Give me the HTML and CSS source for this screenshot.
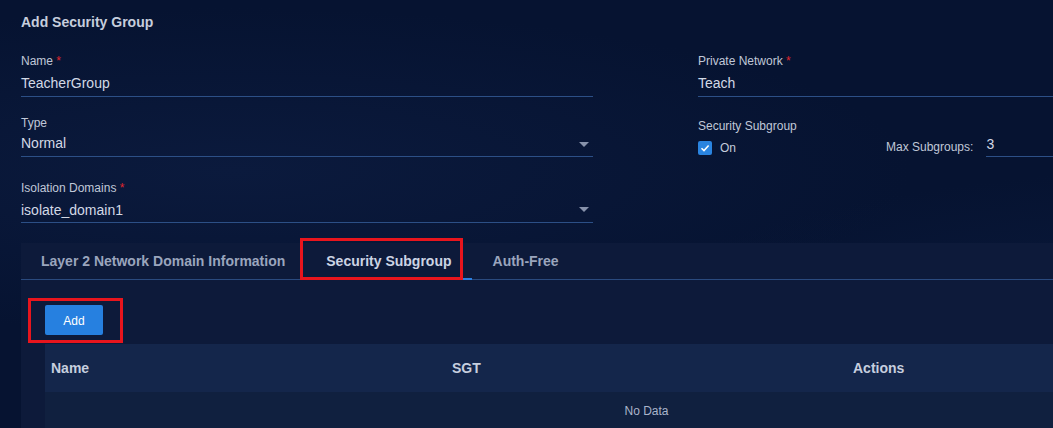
FILE: index.html
```html
<!DOCTYPE html>
<html lang="en">
<head>
    <meta charset="UTF-8">
    <title>Add Security Group</title>
    <link rel="stylesheet" href="styles.css">
</head>
<body>
<div class="page">
    <h2 class="title">Add Security Group</h2>

    <div class="form">
        <div class="field">
            <label>Name <i>*</i></label>
            <div class="input">TeacherGroup</div>
        </div>
        <div class="field">
            <label>Private Network <i>*</i></label>
            <div class="input">Teach</div>
        </div>

        <div class="field row2">
            <label>Type</label>
            <div class="input select">Normal<span class="arrow"></span></div>
        </div>
        <div class="field row2 sub">
            <label>Security Subgroup</label>
            <div class="sub-row">
                <div class="check">
                    <span class="box">
                        <svg width="10" height="10" viewBox="0 0 10 10"><path d="M1.5 5.2 L4 7.6 L8.6 2.6" fill="none" stroke="#fff" stroke-width="1.5"/></svg>
                    </span>
                    On
                </div>
                <span class="max-label">Max Subgroups:</span>
                <div class="input max">3</div>
            </div>
        </div>

        <div class="field row3">
            <label>Isolation Domains <i>*</i></label>
            <div class="input select">isolate_domain1<span class="arrow"></span></div>
        </div>
        <div class="field row3"></div>
    </div>

    <div class="panel">
        <ul class="tabs">
            <li>Layer 2 Network Domain Information</li>
            <li class="active">Security Subgroup</li>
            <li>Auth-Free</li>
        </ul>
        <div class="tab-body">
            <button class="btn">Add</button>
            <table class="grid">
                <thead>
                    <tr><th>Name</th><th>SGT</th><th>Actions</th></tr>
                </thead>
                <tbody>
                    <tr><td colspan="3" class="empty">No Data</td></tr>
                </tbody>
            </table>
        </div>
    </div>

    <!-- annotation marks -->
    <span class="mark mark-tab"></span>
    <span class="mark mark-add"></span>
</div>
</body>
</html>
```

FILE: styles.css
```css
* {
    margin: 0;
    padding: 0;
    box-sizing: border-box;
    list-style: none;
}
html, body {
    height: 100%;
    overflow: hidden;
}
body {
    background: #061331;
    font-family: "Liberation Sans", Arial, sans-serif;
    color: #c3cbdb;
}
.page {
    position: relative;
    width: 1300px;
    height: 428px;
    padding: 14px 0 0 21px;
    background: radial-gradient(ellipse at 18% 40%, #0b1a3d 0%, rgba(6, 19, 49, 0) 45%),
                radial-gradient(ellipse at 95% 90%, #0c1c40 0%, rgba(6, 19, 49, 0) 40%);
}
.title {
    font-size: 14px;
    line-height: 16px;
    font-weight: bold;
    color: #c6cedd;
}

/* form */
.form {
    display: grid;
    grid-template-columns: 572px 572px;
    column-gap: 105px;
    row-gap: 18px;
    margin-top: 23px;
}
.field label {
    display: block;
    font-size: 12px;
    line-height: 16px;
    color: #c0c8d8;
}
.field label i {
    font-style: normal;
    color: #e0262c;
}
.input {
    position: relative;
    height: 28px;
    line-height: 28px;
    font-size: 14px;
    color: #d3d9e6;
    border-bottom: 1px solid #2c4f86;
}
.row2 .input {
    height: 26px;
    line-height: 25px;
}
.row3 {
    margin-top: 5px;
}
.row3 .input {
    height: 27px;
    line-height: 28px;
}
.arrow {
    position: absolute;
    right: 4px;
    top: 11px;
    border-left: 5px solid transparent;
    border-right: 5px solid transparent;
    border-top: 5px solid #8792ab;
}
.field.sub label {
    margin-top: 3px;
}
.sub-row {
    display: flex;
    align-items: center;
    height: 23px;
}
.check {
    display: flex;
    align-items: center;
    gap: 8px;
    width: 188px;
    font-size: 12px;
    color: #c3cbdb;
    padding-top: 4px;
}
.box {
    display: flex;
    align-items: center;
    justify-content: center;
    width: 14px;
    height: 14px;
    border-radius: 2px;
    background: #2a84e0;
}
.max-label {
    font-size: 12px;
    color: #c0c8d8;
    margin-right: 13px;
    padding-top: 3px;
}
.sub .input.max {
    flex: 1;
    height: 23px;
    line-height: 20px;
}

/* tab panel */
.panel {
    width: 1251px;
    height: 200px;
    margin-top: 20px;
    background: #0d1a3a;
}
.tabs {
    display: flex;
    height: 37px;
    border-bottom: 1px solid #2a4a7e;
}
.tabs li {
    padding: 0 20px;
    height: 37px;
    line-height: 37px;
    font-size: 14px;
    font-weight: bold;
    color: #9aa5bd;
    border-bottom: 2px solid transparent;
}
.tabs li + li {
    margin-left: 1px;
}
.tabs li.active {
    color: #ccd4e4;
    border-bottom-color: #2a7fe0;
}
.tab-body {
    padding: 25px 24px 0;
}
.btn {
    display: block;
    width: 58px;
    height: 30px;
    border: 0;
    border-radius: 2px;
    background: #2680e0;
    color: #fff;
    font-family: "Liberation Sans", Arial, sans-serif;
    font-size: 12px;
    padding-top: 1px;
}
.grid {
    width: 1203px;
    margin-top: 9px;
    border-collapse: collapse;
    table-layout: fixed;
}
.grid th {
    height: 48px;
    padding-left: 6px;
    text-align: left;
    font-size: 14px;
    color: #c6cedf;
    background: #14264b;
}
.grid td {
    height: 37px;
    background: #10203f;
}
.grid td.empty {
    text-align: center;
    font-size: 12px;
    color: #aab4ca;
}

/* red annotation boxes */
.mark {
    position: absolute;
    border: 3px solid #e8151d;
}
.mark-tab {
    left: 300px;
    top: 238px;
    width: 163px;
    height: 42px;
}
.mark-add {
    left: 28px;
    top: 298px;
    width: 95px;
    height: 45px;
}
```
